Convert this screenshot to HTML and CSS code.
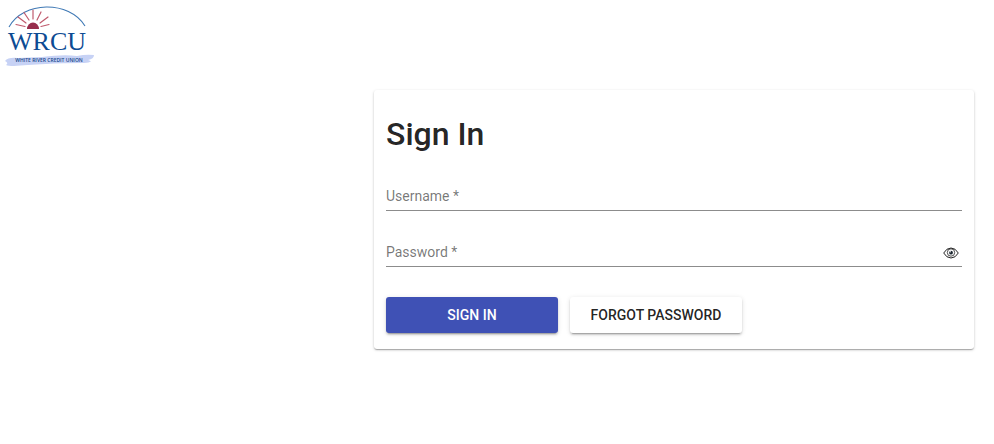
FILE: index.html
```html
<!DOCTYPE html>
<html lang="en">
<head>
  <meta charset="UTF-8">
  <meta name="viewport" content="width=device-width, initial-scale=1.0">
  <title>White River Credit Union - Sign In</title>
  <link rel="stylesheet" href="styles.css">
</head>
<body>
  <header class="header">
    <svg class="logo" viewBox="0 0 92 62" role="img" aria-label="White River Credit Union">
      <!-- sky arc -->
      <path d="M5 22 C19 -4 65 -5 81 21" fill="none" stroke="#3f79b5" stroke-width="1.1"/>
      <!-- sun -->
      <path d="M23 24 A6 6.500 0 0 1 35 24 Z" fill="#972d4c"/>
      <g stroke="#c05b6e" stroke-width="1.2" stroke-linecap="round">
        <path d="M29 5v9M20 7.500l5 7.500M37 7l-4 8M14 12l8 6M44 12l-8 6M12 19.500l9 2M45 19.500l-8 2"/>
      </g>
      <!-- river -->
      <path d="M1 56 Q4 52 14 53 L38 52 Q60 49 73 51 Q82 49 90 50 Q90 54 84 55 Q91 57 80 58 Q58 58 42 59 Q22 60 10 61 Q4 61 2 60 Q5 58 1 56Z" fill="#c7d2f5"/>
      <text class="logo-name" x="43" y="45" text-anchor="middle">WRCU</text>
      <text class="logo-tag" x="45" y="57" text-anchor="middle">WHITE RIVER CREDIT UNION</text>
    </svg>
  </header>

  <main class="content">
    <form class="card">
      <h1>Sign In</h1>
      <div class="field">
        <input type="text" id="username" name="username" placeholder=" " required>
        <label for="username">Username *</label>
      </div>
      <div class="field">
        <input type="password" id="password" name="password" placeholder=" " required>
        <label for="password">Password *</label>
        <button type="button" class="toggle" id="togglePassword" aria-label="Show password">
          <svg viewBox="0 0 16 12" fill="none" stroke="#222">
            <path d="M.700 6 Q3.500 1 8 1 T15.300 6 Q12.500 11 8 11 T.700 6Z"/>
            <circle cx="8" cy="5.500" r="3.700" stroke-width=".8"/>
            <circle cx="8" cy="5.700" r="1.900" fill="#1c2630" stroke="none"/>
            <circle cx="7.200" cy="4.700" r=".7" fill="#fff" stroke="none"/>
          </svg>
        </button>
      </div>
      <div class="actions">
        <button type="submit" class="btn primary">SIGN IN</button>
        <button type="button" class="btn">FORGOT PASSWORD</button>
      </div>
    </form>
  </main>

  <script>
    document.getElementById('togglePassword').addEventListener('click', function() {
      const input = document.getElementById('password');
      input.type = input.type === 'password' ? 'text' : 'password';
    });
  </script>
</body>
</html>
```
FILE: styles.css
```css
* {
  box-sizing: border-box;
}
body {
  margin: 0;
  font-family: Roboto, sans-serif;
  font-size: 14px;
  color: rgba(0, 0, 0, 0.87);
  background-color: #fff;
}
.header {
  padding: 5px 4px 23px;
}
.logo {
  display: block;
  width: 92px;
  height: 62px;
}
.logo-name {
  font-family: "Liberation Serif", serif;
  font-size: 26px;
  fill: #0d4b93;
}
.logo-tag {
  font-family: "Open Sans", sans-serif;
  font-size: 5px;
  font-weight: 600;
  fill: #17488c;
}
.content {
  display: flex;
  justify-content: flex-end;
  padding: 0 20px 20px;
}
.card {
  width: 100%;
  max-width: 600px;
  padding: 24px 12px 16px;
  border-radius: 3px;
  box-shadow: 0 1px 3px rgba(0, 0, 0, 0.2), 0 1px 1px rgba(0, 0, 0, 0.14), 0 2px 1px -1px rgba(0, 0, 0, 0.12);
}
.card h1 {
  margin: 0 0 24px;
  font-size: 32px;
  font-weight: 500;
  line-height: 40px;
}
.field {
  position: relative;
  margin-bottom: 24px;
}
.field input {
  display: block;
  width: 100%;
  height: 33px;
  padding: 4px 32px 4px 0;
  border: none;
  border-bottom: 1px solid #8c8c8c;
  outline: none;
  background: none;
  font: inherit;
}
.field + .field {
  margin-top: -1px;
}
.field input:focus {
  border-bottom-color: #3f51b5;
}
.field label {
  position: absolute;
  top: 8px;
  left: 0;
  line-height: 20px;
  color: rgba(0, 0, 0, 0.54);
  pointer-events: none;
}
.field input:focus + label,
.field input:not(:placeholder-shown) + label {
  top: -8px;
  font-size: 11px;
}
.toggle {
  position: absolute;
  top: 9px;
  right: 0;
  padding: 4px 3px;
  border: none;
  background: none;
  cursor: pointer;
}
.toggle svg {
  display: block;
  width: 16px;
  height: 12px;
}
.actions {
  display: flex;
  gap: 12px;
  padding-top: 6px;
}
.btn {
  flex: 0 1 172px;
  height: 36px;
  padding: 0;
  border: none;
  border-radius: 3px;
  background-color: #fff;
  color: rgba(0, 0, 0, 0.87);
  font: inherit;
  font-weight: 500;
  white-space: nowrap;
  cursor: pointer;
  box-shadow: 0 1px 5px rgba(0, 0, 0, 0.12), 0 2px 2px rgba(0, 0, 0, 0.14), 0 3px 1px -2px rgba(0, 0, 0, 0.2);
}
.btn.primary {
  background-color: #3f51b5;
  color: #fff;
}
```
